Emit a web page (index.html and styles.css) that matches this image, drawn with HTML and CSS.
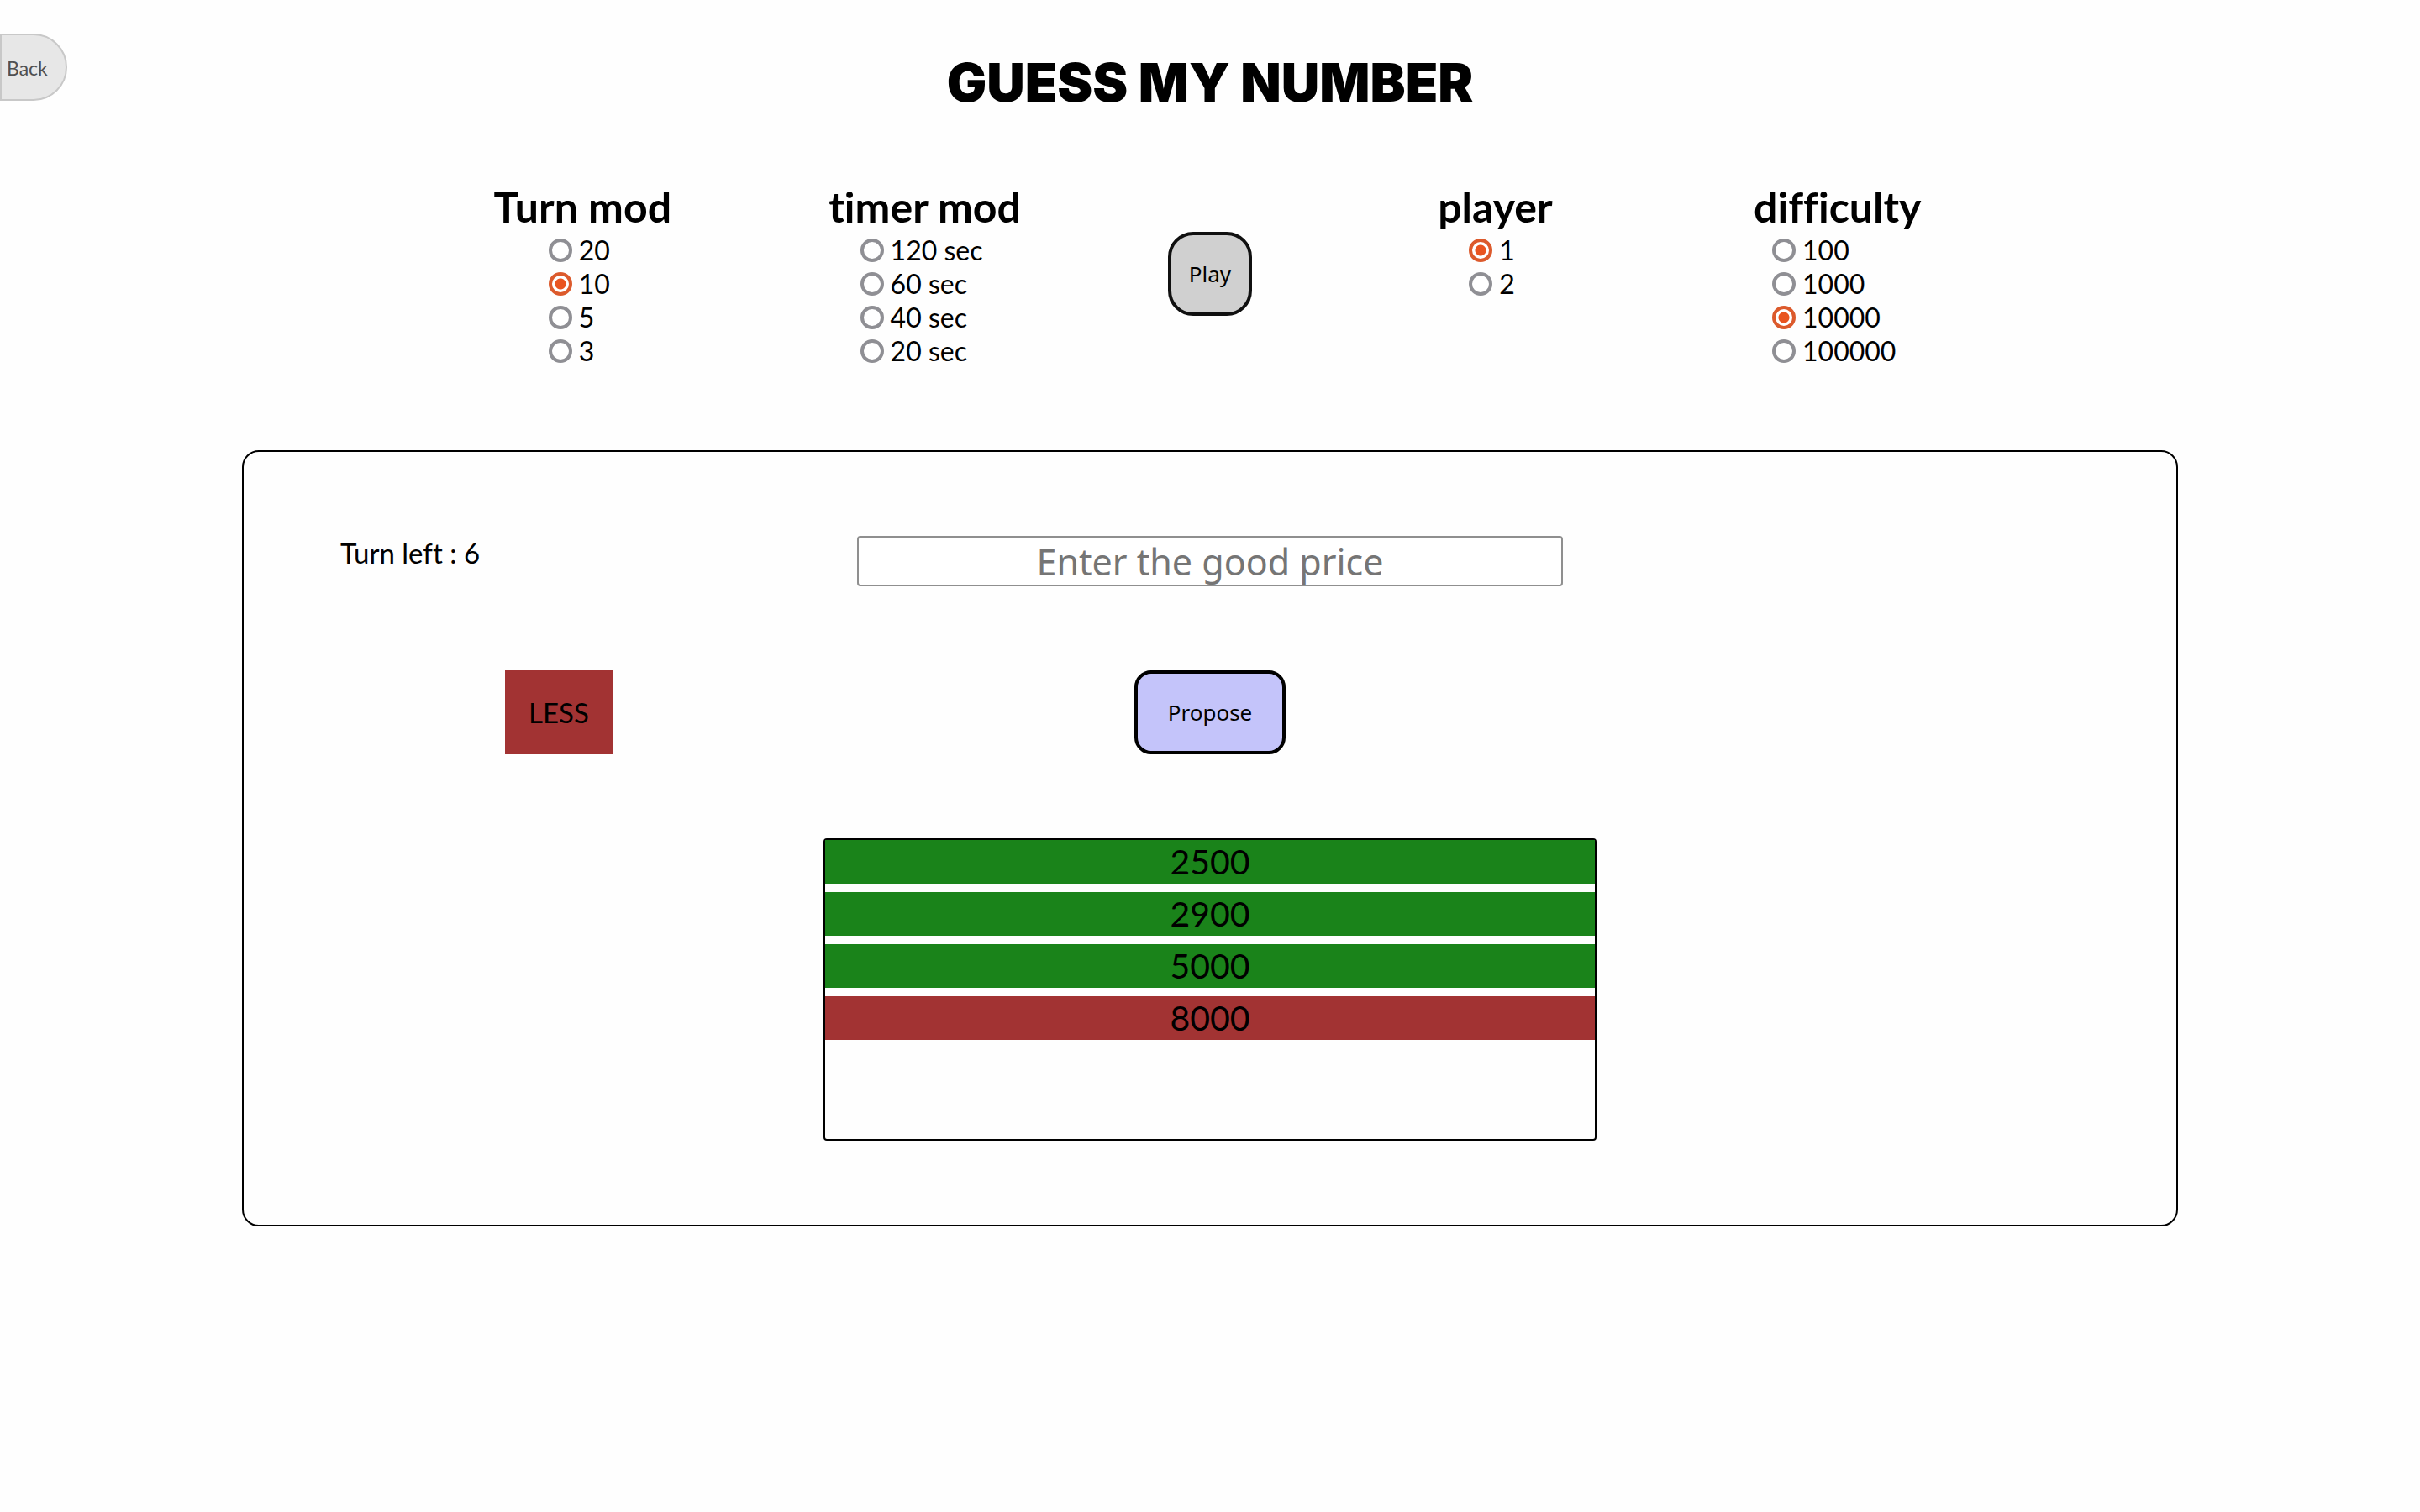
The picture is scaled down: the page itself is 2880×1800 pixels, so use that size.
FILE: index.html
```html
<!DOCTYPE html>
<html lang="en">
<head>
  <meta charset="utf-8">
  <title>Guess my number</title>
  <link rel="stylesheet" href="styles.css">
</head>
<body>
  <button class="back" type="button">Back</button>
  <h1 class="title">GUESS MY NUMBER</h1>

  <form class="settings">
    <fieldset class="group">
      <legend class="group-title">Turn mod</legend>
      <div class="options">
        <label class="option"><input type="radio" name="turn">20</label>
        <label class="option"><input type="radio" name="turn" checked>10</label>
        <label class="option"><input type="radio" name="turn">5</label>
        <label class="option"><input type="radio" name="turn">3</label>
      </div>
    </fieldset>
    <fieldset class="group">
      <legend class="group-title">timer mod</legend>
      <div class="options">
        <label class="option"><input type="radio" name="timer">120 sec</label>
        <label class="option"><input type="radio" name="timer">60 sec</label>
        <label class="option"><input type="radio" name="timer">40 sec</label>
        <label class="option"><input type="radio" name="timer">20 sec</label>
      </div>
    </fieldset>
    <button class="play" type="button">Play</button>
    <fieldset class="group">
      <legend class="group-title">player</legend>
      <div class="options">
        <label class="option"><input type="radio" name="player" checked>1</label>
        <label class="option"><input type="radio" name="player">2</label>
      </div>
    </fieldset>
    <fieldset class="group">
      <legend class="group-title">difficulty</legend>
      <div class="options">
        <label class="option"><input type="radio" name="difficulty">100</label>
        <label class="option"><input type="radio" name="difficulty">1000</label>
        <label class="option"><input type="radio" name="difficulty" checked>10000</label>
        <label class="option"><input type="radio" name="difficulty">100000</label>
      </div>
    </fieldset>
  </form>

  <main class="game">
    <p class="turns">Turn left : 6</p>
    <input class="guess" type="text" placeholder="Enter the good price" aria-label="Your guess">
    <div class="result"><span class="hint">LESS</span></div>
    <button class="propose" type="button">Propose</button>
    <ul class="history">
      <li class="try more">2500</li>
      <li class="try more">2900</li>
      <li class="try more">5000</li>
      <li class="try less">8000</li>
    </ul>
  </main>
</body>
</html>
```

FILE: styles.css
```css
* {
  box-sizing: border-box;
  margin: 0;
  padding: 0;
}

body {
  background: #fefefe;
  color: #000;
  font: 32px/40px Lato, sans-serif;
  font-variant-ligatures: none;
}

button,
input {
  font-family: "Noto Sans", sans-serif;
  color: #000;
}

.back {
  position: absolute;
  top: 40px;
  left: 0;
  width: 80px;
  height: 80px;
  padding: 2px 0 0 6px;
  border: 2px solid #c8c8c8;
  border-radius: 0 40px 40px 0;
  background: #e7e7e7;
  color: #505050;
  font: 23px/28px Lato, sans-serif;
  text-align: left;
}

.title {
  padding-top: 58px;
  font: 900 63px/80px Inter, sans-serif;
  text-align: center;
}

.settings {
  display: grid;
  grid-template-columns: 6fr 6fr 4fr 6fr 6fr;
  width: 66%;
  margin: 78px auto 0;
}

.group {
  border: 0;
  min-width: 0;
}

.group-title {
  width: 100%;
  font-size: 50px;
  font-weight: 700;
  line-height: 60px;
  text-align: center;
}

.options {
  width: fit-content;
  margin: 2px auto 0;
  padding-right: 8px;
}

.option {
  display: flex;
  align-items: center;
  gap: 8px;
}

.option input {
  appearance: none;
  width: 28px;
  height: 28px;
  border: 4px solid #8f8f94;
  border-radius: 50%;
  background: #fff;
}

.option input:checked {
  border-color: #dc5a2c;
  background: radial-gradient(circle, #e95420 0 6px, #fff 7px);
}

.play {
  justify-self: center;
  width: 100px;
  height: 100px;
  margin-top: 60px;
  border: 4px solid #101010;
  border-radius: 30px;
  background: #d0d0d0;
  font-size: 26px;
}

.game {
  display: grid;
  grid-template-columns: 3fr 4fr 3fr;
  gap: 100px 0;
  width: 80%;
  margin: 98px auto 0;
  padding: 100px 0;
  border: 2px solid #000;
  border-radius: 20px;
}

.turns,
.result {
  grid-column: 1;
  padding: 0 55px 0 115px;
  font-size: 33px;
}

.result {
  display: flex;
  justify-content: center;
}

.hint {
  padding: 30px 28px;
  background: #a23333;
}

.guess {
  grid-column: 2;
  height: 60px;
  margin: 0 40px;
  border: 2px solid #8f8f8f;
  border-radius: 4px;
  background: #fff;
  font-size: 43px;
  text-align: center;
}

.guess::placeholder {
  color: #757575;
}

.propose {
  grid-column: 2;
  justify-self: center;
  width: 180px;
  height: 100px;
  border: 4px solid #000;
  border-radius: 20px;
  background: #c4c4fa;
  font-size: 26px;
}

.history {
  grid-column: 2;
  min-height: 360px;
  border: 2px solid #000;
  border-radius: 4px;
  list-style: none;
}

.try {
  margin-bottom: 10px;
  font-size: 41px;
  line-height: 52px;
  text-align: center;
}

.more {
  background: #1a831a;
}

.less {
  background: #a23333;
}
```
